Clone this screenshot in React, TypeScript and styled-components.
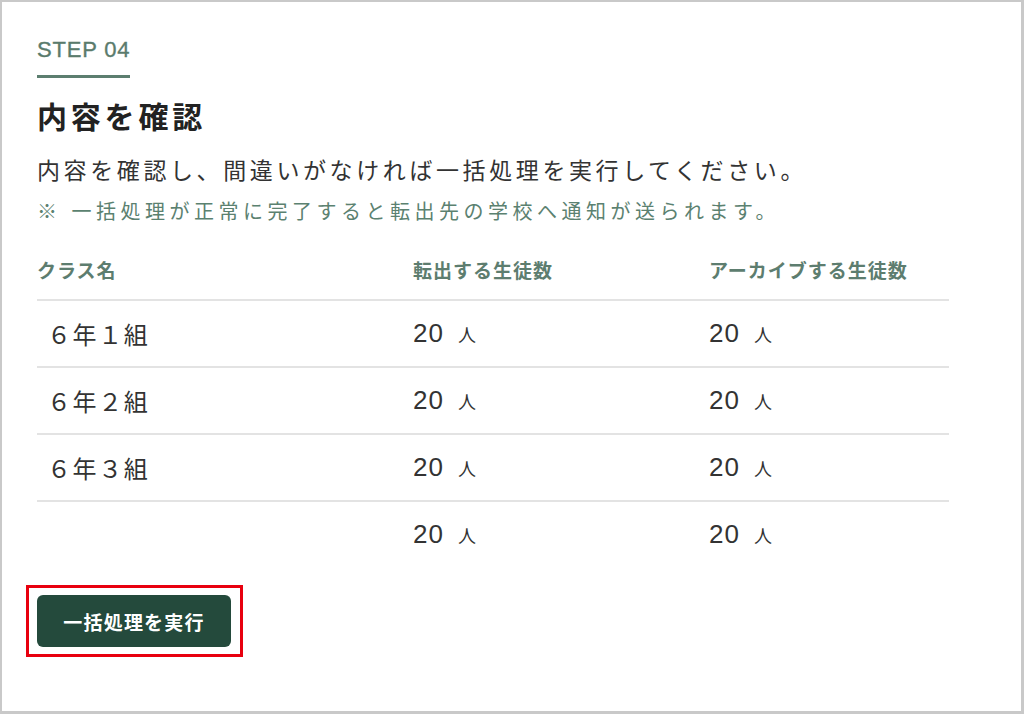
import React from 'react';
import styled, { createGlobalStyle } from 'styled-components';

type ClassRow = {
  name: string;
  transfer: number;
  archive: number;
};

const rows: ClassRow[] = [
  { name: '６年１組', transfer: 20, archive: 20 },
  { name: '６年２組', transfer: 20, archive: 20 },
  { name: '６年３組', transfer: 20, archive: 20 },
  { name: '', transfer: 20, archive: 20 },
];

const GlobalStyle = createGlobalStyle`
  html, body {
    margin: 0;
    padding: 0;
    background: #ffffff;
  }
  body {
    font-family: "Liberation Sans", "Noto Sans CJK JP", sans-serif;
    color: #333333;
  }
`;

const Frame = styled.div`
  box-sizing: border-box;
  width: 1024px;
  height: 714px;
  border: 2px solid #c9c9c9;
  border-right-width: 3px;
  border-bottom-width: 3px;
  padding: 36px 0 0 35px;
  background: #ffffff;
`;

const StepLabel = styled.div`
  display: inline-block;
  font-size: 22px;
  line-height: 24px;
  letter-spacing: 0.8px;
  color: #5a7b6c;
  -webkit-text-stroke: 0.35px #5a7b6c;
  padding-bottom: 13px;
  border-bottom: 3px solid #5c7e6f;
`;

const Title = styled.h1`
  margin: 20px 0 0;
  font-size: 30px;
  line-height: 40px;
  font-weight: 700;
  letter-spacing: 3.8px;
  color: #222222;
`;

const Lead = styled.p`
  margin: 17px 0 0;
  font-size: 23px;
  line-height: 32px;
  letter-spacing: 3.6px;
  color: #333333;
`;

const Note = styled.p`
  margin: 11px 0 0;
  font-size: 20px;
  line-height: 28px;
  letter-spacing: 4.5px;
  color: #5b8170;
`;

const Table = styled.div`
  width: 912px;
  margin-top: 34px;
`;

const Row = styled.div<{ $head?: boolean; $last?: boolean }>`
  display: grid;
  grid-template-columns: 376px 296px 1fr;
  align-items: center;
  height: ${({ $head }) => ($head ? 'auto' : '65px')};
  padding-bottom: ${({ $head }) => ($head ? '15px' : '0')};
  border-bottom: ${({ $last }) => ($last ? 'none' : '2px solid #e3e3e3')};
`;

const HeadCell = styled.div`
  font-size: 19px;
  line-height: 24px;
  font-weight: 700;
  letter-spacing: 1px;
  color: #5d7d6f;
`;

const NameCell = styled.div`
  padding-left: 10px;
  font-size: 24px;
  letter-spacing: 1.6px;
  color: #333333;
`;

const CountCell = styled.div`
  font-size: 26px;
  letter-spacing: 1px;
  color: #333333;
`;

const Unit = styled.span`
  margin-left: 14px;
  font-size: 18px;
  letter-spacing: 0;
`;

const Highlight = styled.div`
  position: relative;
  display: inline-block;
  margin-top: 28px;

  &::after {
    content: '';
    position: absolute;
    top: -10px;
    left: -11px;
    right: -12px;
    bottom: -10px;
    border: 3px solid #e8000f;
    pointer-events: none;
  }
`;

const RunButton = styled.button`
  display: flex;
  align-items: center;
  justify-content: center;
  width: 194px;
  height: 52px;
  padding: 0;
  border: none;
  border-radius: 6px;
  background: #244a3c;
  color: #ffffff;
  font-family: "Liberation Sans", "Noto Sans CJK JP", sans-serif;
  font-size: 19px;
  font-weight: 700;
  letter-spacing: 1.2px;
  cursor: pointer;
`;

const App = () => (
  <>
    <GlobalStyle />
    <Frame>
      <StepLabel>STEP 04</StepLabel>
      <Title>内容を確認</Title>
      <Lead>内容を確認し、間違いがなければ一括処理を実行してください。</Lead>
      <Note>※ 一括処理が正常に完了すると転出先の学校へ通知が送られます。</Note>

      <Table>
        <Row $head>
          <HeadCell>クラス名</HeadCell>
          <HeadCell>転出する生徒数</HeadCell>
          <HeadCell>アーカイブする生徒数</HeadCell>
        </Row>
        {rows.map((row, i) => (
          <Row key={i} $last={i === rows.length - 1}>
            <NameCell>{row.name}</NameCell>
            <CountCell>
              {row.transfer}
              <Unit>人</Unit>
            </CountCell>
            <CountCell>
              {row.archive}
              <Unit>人</Unit>
            </CountCell>
          </Row>
        ))}
      </Table>

      <Highlight>
        <RunButton>一括処理を実行</RunButton>
      </Highlight>
    </Frame>
  </>
);

export default App;
